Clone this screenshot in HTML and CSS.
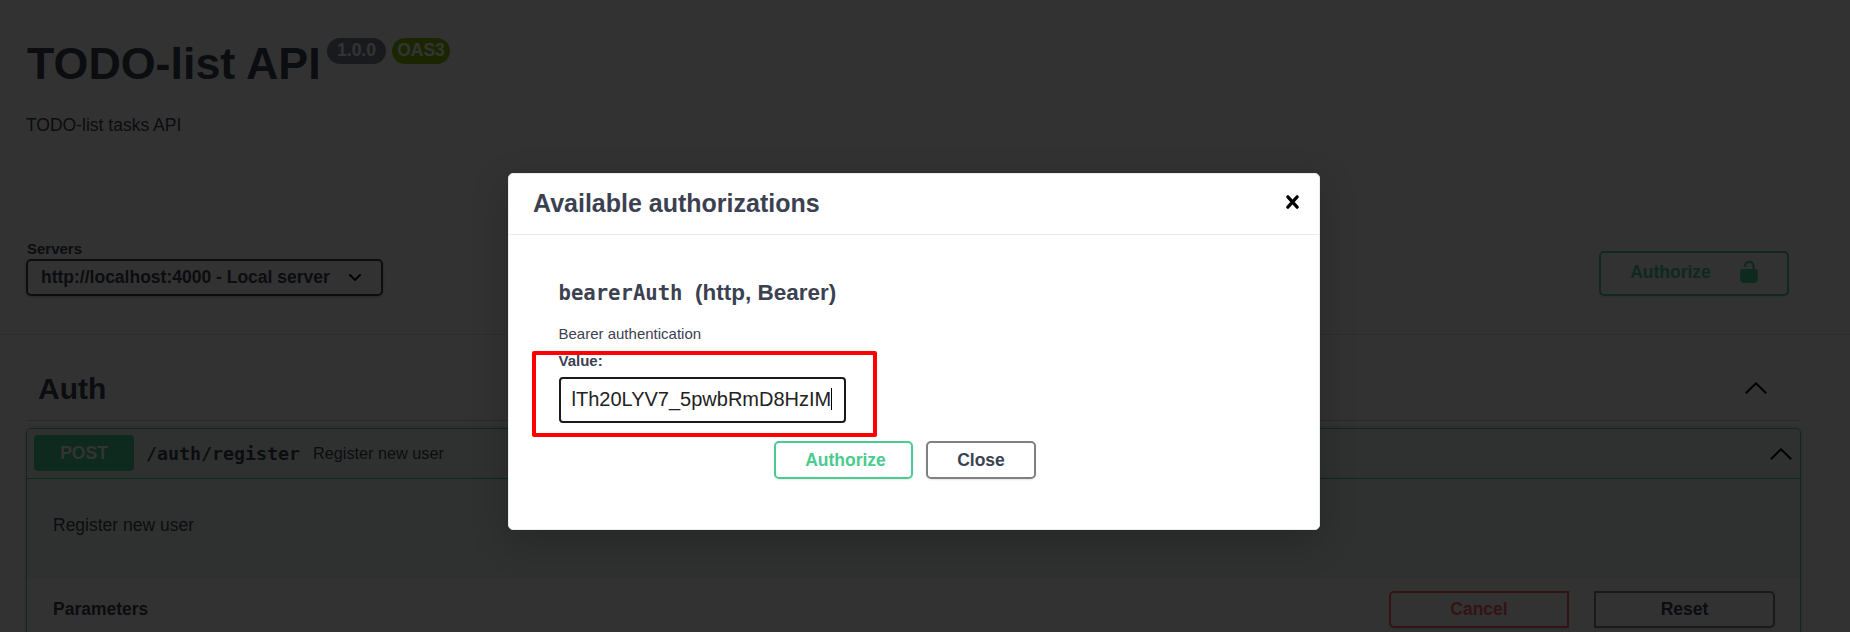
FILE: index.html
```html
<!DOCTYPE html>
<html lang="en">
<head>
<meta charset="utf-8">
<title>TODO-list API</title>
<link rel="stylesheet" href="styles.css">
</head>
<body>
<div class="page">
  <header class="info">
    <div class="title-row">
      <h1 class="title">TODO-list API</h1>
      <span class="badge">1.0.0</span>
      <span class="badge badge-oas">OAS3</span>
    </div>
    <p class="lead">TODO-list tasks API</p>
  </header>
  <section class="schemes">
    <div class="servers">
      <span class="servers-label">Servers</span>
      <div class="select">
        <span>http://localhost:4000 - Local server</span>
        <svg class="select-arrow" viewBox="0 0 12 8"><path d="M1 1l5 5 5-5" fill="none" stroke="#000" stroke-width="1.9" stroke-linecap="round"/></svg>
      </div>
    </div>
    <button class="btn btn-auth-top"><span>Authorize</span>
      <svg class="lock" viewBox="0 0 18 23"><path d="M5.200 6V5.200a4.200 4 0 0 1 8.300 0V10" fill="none" stroke="#49cc90" stroke-width="2.200" stroke-linecap="round"/><path d="M2 9h14l1.700 1.500V20.500L15.500 23H2.500L.3 20.500V10.500z" fill="#49cc90"/></svg>
    </button>
  </section>
  <main class="operations">
    <div class="tag">
      <h2 class="tag-name">Auth</h2>
      <svg class="chevron" viewBox="0 0 22 12"><path d="M.8 11.200L11 1.200l10.200 10" fill="none" stroke="#000" stroke-width="1.900"/></svg>
    </div>
    <div class="opblock">
      <div class="summary">
        <span class="method">POST</span>
        <span class="path">/auth/register</span>
        <span class="desc">Register new user</span>
        <svg class="chevron" viewBox="0 0 22 12"><path d="M.8 11.200L11 1.200l10.200 10" fill="none" stroke="#000" stroke-width="1.900"/></svg>
      </div>
      <p class="op-text">Register new user</p>
      <div class="params">
        <h4 class="params-title">Parameters</h4>
        <button class="btn btn-cancel">Cancel</button>
        <button class="btn btn-reset">Reset</button>
      </div>
    </div>
  </main>
</div>
<div class="backdrop">
  <div class="modal">
    <div class="modal-head">
      <h3 class="modal-title">Available authorizations</h3>
      <svg class="close-icon" viewBox="0 0 12 13"><path d="M1.700 1.700l8.600 9.600M10.300 1.700l-8.600 9.600" fill="none" stroke="#000" stroke-width="3" stroke-linecap="round"/></svg>
    </div>
    <div class="modal-body">
      <h4 class="scheme"><code class="scheme-name">bearerAuth</code><span>(http, Bearer)</span></h4>
      <p class="scheme-desc">Bearer authentication</p>
      <div class="field">
        <span class="field-label">Value:</span>
        <div class="input"><span class="value">lTh20LYV7_5pwbRmD8HzIM</span><i class="caret"></i></div>
        <div class="highlight"></div>
      </div>
      <div class="actions">
        <button class="btn btn-authorize">Authorize</button>
        <button class="btn btn-close">Close</button>
      </div>
    </div>
  </div>
</div>
</body>
</html>
```

FILE: styles.css
```css
* { box-sizing: border-box; }
body {
  margin: 0;
  height: 632px;
  overflow: hidden;
  position: relative;
  background: #fafafa;
  color: #3b4151;
  font-family: "Liberation Sans", Arial, sans-serif;
  font-size: 17.5px;
}
h1, h2, h3, h4, p { margin: 0; }
svg { display: block; flex: none; }
.page { height: 632px; overflow: hidden; }

.info { height: 240px; padding: 37px 26px 0; }
.title-row { display: flex; align-items: flex-start; height: 78px; }
.title { width: 301px; padding-left: 1px; font-size: 44.8px; line-height: 52px; white-space: nowrap; }
.badge {
  width: 59px;
  height: 26px;
  margin: 1px 6px 0 0;
  border-radius: 13px;
  background: #7d8492;
  color: #fff;
  font-weight: 700;
  line-height: 25px;
  text-align: center;
}
.badge-oas { width: 58px; background: #89bf04; }
.lead { line-height: 20px; }

.schemes {
  display: flex;
  justify-content: space-between;
  height: 95px;
  padding: 0 61px 0 26px;
  border-bottom: 1px solid #e0e0e0;
}
.servers-label { display: block; height: 19px; font-size: 15px; font-weight: 700; line-height: 17px; padding-left: 1px; }
.select {
  display: flex;
  align-items: center;
  justify-content: space-between;
  width: 357px;
  height: 37px;
  padding: 0 20px 0 13px;
  border: 2px solid #41444e;
  border-radius: 5px;
  box-shadow: 0 1px 3px rgba(0,0,0,.25);
  font-weight: 700;
}
.select-arrow { width: 12px; height: 8px; margin-top: 1px; }

.btn {
  display: flex;
  align-items: center;
  justify-content: center;
  border: 2px solid #808080;
  border-radius: 5px;
  padding: 0;
  background: transparent;
  box-shadow: 0 1px 2px rgba(0,0,0,.1);
  color: #3b4151;
  font: 700 17.5px "Liberation Sans", Arial, sans-serif;
}
.btn-auth-top { width: 190px; height: 45px; margin-top: 11px; gap: 29px; padding-bottom: 3px; border-color: #49cc90; color: #49cc90; }
.lock { width: 18px; height: 23px; margin-bottom: 1px; }

.operations { padding: 0 49px 0 26px; }
.tag {
  display: flex;
  align-items: center;
  justify-content: space-between;
  height: 86px;
  padding: 20px 34px 0 12px;
  border-bottom: 1px solid #c9cacc;
}
.tag-name { font-size: 30px; line-height: 36px; padding-top: 2px; }
.chevron { width: 22px; height: 12px; }
.opblock {
  height: 260px;
  margin-top: 7px;
  border: 1px solid #49cc90;
  border-radius: 5px;
  background: #ecf6f1;
  box-shadow: 0 0 4px rgba(0,0,0,.19);
}
.summary {
  display: flex;
  align-items: center;
  height: 50px;
  padding: 0 8px 0 7px;
  border-bottom: 1px solid #49cc90;
}
.method {
  width: 100px;
  height: 36px;
  margin: 0 12px 1px 0;
  border-radius: 4px;
  background: #49cc90;
  color: #fff;
  font-weight: 700;
  line-height: 36px;
  text-align: center;
}
.path { font: 700 18.27px "DejaVu Sans Mono", monospace; }
.desc { flex: 1; padding-left: 13px; font-size: 16.25px; }
.op-text { height: 99px; padding: 36px 26px 0; line-height: 20px; }
.params { display: flex; align-items: center; height: 82px; padding: 0 25px 20px 26px; background: #fafafa; }
.params-title { flex: 1; font-size: 17.5px; }
.btn-cancel { width: 180px; height: 37px; margin-right: 25px; padding-top: 1px; border-color: #ff6060; color: #ff6060; border-radius: 5px 0 0 5px; }
.btn-reset { width: 181px; height: 37px; padding-top: 1px; border-radius: 0 5px 5px 0; }

.backdrop {
  position: absolute;
  inset: 0;
  padding: 173px 0 0 508px;
  background: rgba(0,0,0,.8);
}
.modal {
  width: 812px;
  height: 357px;
  border: 1px solid #ebebeb;
  border-radius: 5px;
  background: #fff;
  box-shadow: 0 12px 38px rgba(0,0,0,.2);
}
.modal-head {
  display: flex;
  align-items: center;
  justify-content: space-between;
  height: 61px;
  padding: 0 20px 2px 24px;
  border-bottom: 1px solid #ebebeb;
}
.modal-title { font-size: 25px; }
.close-icon { width: 13px; height: 14px; margin-bottom: 3px; }
.modal-body { padding: 43px 50px 0 49.500px; }
.scheme { display: flex; align-items: baseline; gap: 12.500px; font-size: 22.5px; line-height: 30px; }
.scheme-name { font: 700 20.6px "DejaVu Sans Mono", monospace; }
.scheme-desc { margin-top: 16px; font-size: 15px; line-height: 20px; }
.field { position: relative; }
.field-label { display: block; padding-top: 7px; height: 33px; font-size: 15px; font-weight: 700; line-height: 20px; }
.input {
  display: flex;
  align-items: center;
  width: 287px;
  height: 46px;
  padding: 0 0 2px 11px;
  border: 2px solid #1a1a1a;
  border-radius: 4px;
  color: #222;
  font-size: 20px;
}
.caret { width: 1px; height: 22px; background: #000; }
.highlight {
  position: absolute;
  left: -27px;
  top: 7px;
  width: 345px;
  height: 86px;
  border: 4px solid #f00;
  border-radius: 2px;
}
.actions { display: flex; gap: 13px; padding: 18px 0 0 215.500px; }
.btn-authorize { width: 139px; height: 38px; padding: 1px 0 0 4px; border-color: #49cc90; color: #49cc90; }
.btn-close { width: 110px; height: 38px; padding-top: 1px; }
```
